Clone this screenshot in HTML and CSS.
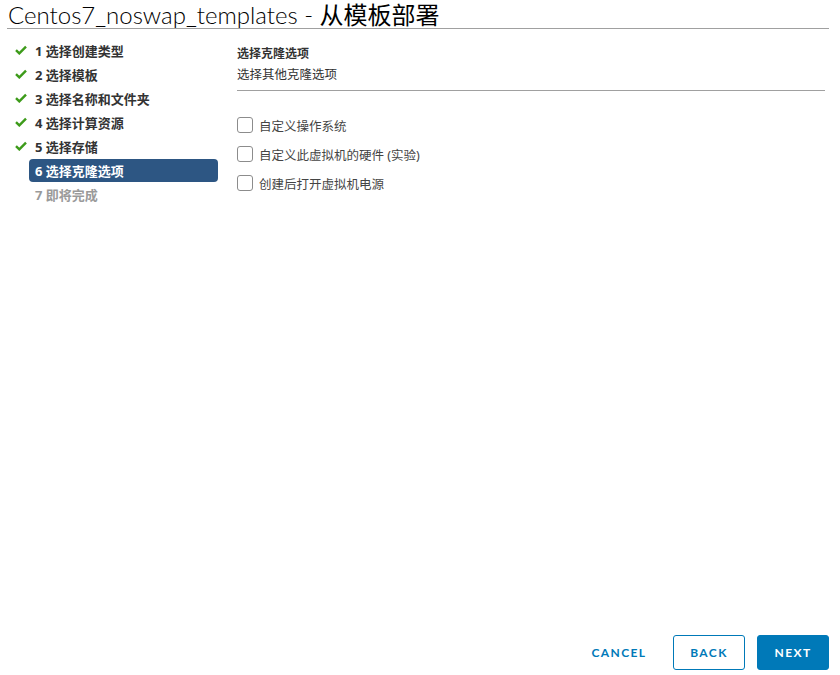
FILE: index.html
```html
<!DOCTYPE html>
<html lang="zh">
<head>
<meta charset="utf-8">
<title>从模板部署</title>
<link rel="stylesheet" href="styles.css">
</head>
<body>
<div class="page">
  <header class="title">Centos7_noswap_templates - <span class="cjk">从模板部署</span></header>
  <div class="main">
    <nav class="steps">
      <div class="step done"><svg class="check" viewBox="0 0 12 10"><path d="M1 5.2 L4.3 8.4 L11 1.6" fill="none" stroke="#3d9b1a" stroke-width="2.4"/></svg><span>1 选择创建类型</span></div>
      <div class="step done"><svg class="check" viewBox="0 0 12 10"><path d="M1 5.2 L4.3 8.4 L11 1.6" fill="none" stroke="#3d9b1a" stroke-width="2.4"/></svg><span>2 选择模板</span></div>
      <div class="step done"><svg class="check" viewBox="0 0 12 10"><path d="M1 5.2 L4.3 8.4 L11 1.6" fill="none" stroke="#3d9b1a" stroke-width="2.4"/></svg><span>3 选择名称和文件夹</span></div>
      <div class="step done"><svg class="check" viewBox="0 0 12 10"><path d="M1 5.2 L4.3 8.4 L11 1.6" fill="none" stroke="#3d9b1a" stroke-width="2.4"/></svg><span>4 选择计算资源</span></div>
      <div class="step done"><svg class="check" viewBox="0 0 12 10"><path d="M1 5.2 L4.3 8.4 L11 1.6" fill="none" stroke="#3d9b1a" stroke-width="2.4"/></svg><span>5 选择存储</span></div>
      <div class="step active"><span>6 选择克隆选项</span></div>
      <div class="step pending"><span>7 即将完成</span></div>
    </nav>
    <section class="content">
      <div class="head">
        <div class="h-title">选择克隆选项</div>
        <div class="h-sub">选择其他克隆选项</div>
      </div>
      <div class="options">
        <label class="opt"><span class="box"></span><span>自定义操作系统</span></label>
        <label class="opt"><span class="box"></span><span>自定义此虚拟机的硬件 (实验)</span></label>
        <label class="opt"><span class="box"></span><span>创建后打开虚拟机电源</span></label>
      </div>
    </section>
  </div>
  <footer class="actions">
    <button class="btn link">CANCEL</button>
    <button class="btn outline">BACK</button>
    <button class="btn primary">NEXT</button>
  </footer>
</div>
</body>
</html>
```
FILE: styles.css
```css
html, body {
  margin: 0;
  padding: 0;
  background: #fff;
}
body {
  font-family: "Noto Sans", "Noto Sans CJK SC", sans-serif;
  color: #333;
}
.page {
  width: 840px;
  height: 675px;
  display: flex;
  flex-direction: column;
  box-sizing: border-box;
  padding: 0 11px 5px 7px;
}
.title {
  font-family: "Lato", "Noto Sans CJK SC", sans-serif;
  font-size: 24px;
  font-weight: 300;
  line-height: 26px;
  height: 26px;
  padding-top: 2px;
  color: #000;
  padding-left: 1px;
  border-bottom: 1px solid #a0a0a0;
  white-space: nowrap;
}
.title .cjk {
  font-family: "Noto Sans CJK SC", sans-serif;
  font-weight: 400;
  font-size: 24px;
  line-height: 1;
}
.main {
  flex: 1;
  display: flex;
  padding-top: 9px;
}
.steps {
  width: 211px;
  box-sizing: border-box;
  padding-left: 22px;
  display: flex;
  flex-direction: column;
}
.step {
  position: relative;
  height: 24px;
  display: flex;
  align-items: center;
  font-size: 13px;
  font-weight: 700;
  color: #333;
  padding-left: 6px;
  border-radius: 4px;
}
.check {
  position: absolute;
  left: -14px;
  top: 7px;
  width: 12px;
  height: 10px;
}
.step.active {
  background: #2d5683;
  color: #fff;
  height: 23px;
  margin-top: 1px;
}
.step.pending {
  color: #9a9a9a;
}
.content {
  flex: 1;
  padding-left: 19px;
  padding-right: 4px;
}
.head {
  border-bottom: 1px solid #a0a0a0;
  padding-top: 5px;
  padding-bottom: 5px;
}
.h-title {
  font-size: 12px;
  font-weight: 700;
  line-height: 21px;
  color: #333;
}
.h-sub {
  font-size: 12.5px;
  line-height: 21px;
  color: #333;
}
.options {
  display: flex;
  flex-direction: column;
  gap: 13px;
  padding-top: 26px;
}
.opt {
  display: flex;
  align-items: center;
  gap: 6px;
  font-size: 12.5px;
  color: #444;
  height: 16px;
}
.box {
  width: 14px;
  height: 14px;
  border: 1px solid #8c8c8c;
  border-radius: 3px;
  background: #fff;
}
.actions {
  display: flex;
  justify-content: flex-end;
  align-items: flex-end;
  gap: 12px;
  height: 35px;
}
.btn {
  font-family: "Lato", "Noto Sans", sans-serif;
  font-size: 12px;
  font-weight: 700;
  letter-spacing: 1.4px;
  height: 35px;
  width: 72px;
  border-radius: 3px;
  box-sizing: border-box;
  cursor: pointer;
}
.btn.link {
  background: none;
  border: none;
  color: #0079b8;
  width: 80px;
  margin-right: 2px;
}
.btn.outline {
  background: #fff;
  border: 1px solid #0079b8;
  color: #0079b8;
}
.btn.primary {
  background: #0079b8;
  border: 1px solid #0079b8;
  color: #fff;
}
```
